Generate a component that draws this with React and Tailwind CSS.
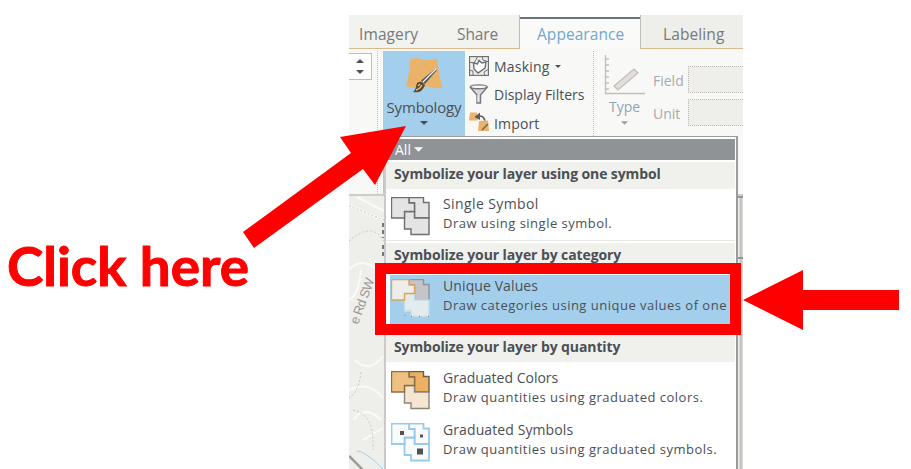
import React from 'react';

const UI = "font-['Open_Sans','Noto_Sans',sans-serif]";

const LEFT = '0.5,0.5 18,0.5 18,6 23.5,6 23.5,14.5 13.5,14.5 13.5,21 0.5,21';
const RIGHT = '18,0.5 32.5,0.5 32.5,5.5 38,5.5 38,21 23.5,21 23.5,6 18,6';
const BOTTOM = '13.5,14.5 23.5,14.5 23.5,21 38,21 38,37.5 20,37.5 20,32 13.5,32';

function Parcels({ fills, strokes, width = 1.4, children }) {
  return (
    <svg className="h-[39px] w-[39px] shrink-0" viewBox="0 0 39 39">
      {[RIGHT, BOTTOM, LEFT].map((p, i) => (
        <polygon key={p} points={p} fill={fills[i]} stroke={strokes[i]} strokeWidth={width} />
      ))}
      {children}
    </svg>
  );
}

const SingleIcon = () => (
  <Parcels fills={['#e4e5e3', '#e4e5e3', '#e4e5e3']} strokes={['#6b6e72', '#6b6e72', '#6b6e72']} />
);
const UniqueIcon = () => (
  <Parcels fills={['#c3c5c8', '#e4ebed', '#edeeea']} strokes={['#8f9598', '#c4dbe8', '#dca65a']}>
    <path d="M13.5 36.5h1M20 37.5h1M37 37.5h1M28 37.5h1" stroke="#777" />
  </Parcels>
);
const ColorsIcon = () => (
  <Parcels fills={['#ebb061', '#f4e6d0', '#eec182']} strokes={['#6b5c4b', '#8d8579', '#8a7049']} />
);
const SymbolsIcon = () => (
  <Parcels fills={['#fafafa', '#fafafa', '#fafafa']} strokes={['#97cbec', '#97cbec', '#97cbec']} width={1.8}>
    <path d="M9 8h4v4H9zM29 11.500h3v3h-3zM26 25.500h6v6h-6z" fill="#4d5358" />
  </Parcels>
);

function Header({ children }) {
  return (
    <div className="flex h-[27px] items-center bg-[#f0f0ed] pb-[3px] pl-2">
      <span className="text-[14px] leading-5 font-bold tracking-[-0.1px] text-[#4b4f54]">{children}</span>
    </div>
  );
}

function Item({ icon, title, desc, titleClass, className }) {
  return (
    <div className={'flex gap-[13px] ' + className}>
      {icon}
      <div className="-mt-[4px] flex flex-col">
        <span className={'h-5 text-[14px] leading-[21px] text-[#4b4f54] ' + titleClass}>{title}</span>
        <span className="h-5 text-[13px] leading-[21px] tracking-[0.49px] text-[#4b4f54]">{desc}</span>
      </div>
    </div>
  );
}

function Tabs() {
  return (
    <div className="flex h-[34px] text-[15.500px] leading-[38px] text-[#77797b]">
      <div className="flex w-[171px] border-r border-b border-r-[#c2bcb6] border-b-[#dcb98c] bg-[#f2f2ef] pl-[10px]">
        <span className="w-[98px] tracking-[0.1px]">Imagery</span>
        <span className="tracking-[-0.1px]">Share</span>
      </div>
      <div className="mt-[2px] w-[120px] border-t-2 border-[#68747e] bg-[#fafaf9] pl-[17px] leading-[31px] tracking-[0.05px] text-[#71a7cd]">
        Appearance
      </div>
      <div className="flex-1 border-b border-l border-b-[#dcb98c] border-l-[#c2bcb6] bg-[#eeeeea] pl-[22px] tracking-[0.1px]">
        Labeling
      </div>
    </div>
  );
}

const Caret = ({ className }) => (
  <svg className={className} viewBox="0 0 8 4">
    <path d="M0 0h8L4 4z" fill="currentColor" />
  </svg>
);

function Ribbon() {
  return (
    <div className="flex h-[147px] border-b-2 border-[#d0ccc7] bg-[#f8f8f7] pt-[2px] text-[14px] leading-5 text-[#4b4f54]">
      <div className="mt-[2px] flex h-[27px] w-[23px] shrink-0 flex-col items-center justify-between border border-l-0 border-[#c2bcb6] bg-white py-[5px] pr-[1px]">
        <Caret className="h-1 w-2 rotate-180" />
        <Caret className="h-1 w-2" />
      </div>
      <div className="ml-[5px] w-[6px] shrink-0 border-l border-dotted border-[#c2bcb6]" />
      <div className="flex w-[82px] shrink-0 flex-col items-center bg-[#a3cfec] pt-[6px]">
        <svg className="h-[38px] w-[40px]" viewBox="0 0 40 38">
          <path d="M6 3q4-3 9-1.500 9 3 18.500 0 0 10 5 29.500-8 1-15-2-9 4-22 0 4-10 4.500-26z" fill="#ebb36a" />
          <path d="M33 13 21 27l-4-3.500L31 12z" fill="#55585c" />
          <path d="m32 12-13 13" stroke="#f4f4f4" strokeWidth="1.200" />
          <path d="M18 25q-6-1-6 5-1 4-3 5 9 2 12-7z" fill="#5b4a35" />
          <path d="M12 33q4-1 6-5M14 29l2-2" stroke="#f0b96e" strokeWidth="1.300" fill="none" />
        </svg>
        <span className="mt-[2px] text-[15px] leading-5 tracking-[-0.15px]">Symbology</span>
        <Caret className="mt-[4px] h-1 w-2" />
      </div>
      <div className="flex w-[129px] shrink-0 flex-col gap-2 border-r border-dotted border-[#c2bcb6] pt-[5px] pl-1">
        <div className="flex h-5 items-center">
          <svg className="mr-[5px] h-5 w-5" viewBox="0 0 20 20" fill="none" stroke="#6d7073">
            <rect x="0.5" y="0.5" width="19" height="19" fill="#ededeb" strokeWidth="1.300" />
            <path d="M0 6 5 7 9 0M13 0l1 4 6 2M0 14l4 1v5M16 20l-1-4 5-3" />
            <path d="M4.500 7l4 1 1.500-3.500 3 2.500 4-1-1 6-7 5-4-4z" fill="#fff" strokeWidth="1.400" />
          </svg>
          <span className="relative top-px tracking-[0.2px]">Masking</span>
          <Caret className="ml-[5px] h-[3px] w-[6px]" />
        </div>
        <div className="flex h-5 items-center">
          <svg className="mr-[5px] h-5 w-5" viewBox="0 0 20 20" fill="none" stroke="#75787b">
            <path d="M1.500 3.500 8 11v8h3.500v-8L18 3.500z" fill="#d9d9d7" strokeWidth="1.400" />
            <ellipse cx="9.700" cy="2.800" rx="8.200" ry="1.900" fill="#f7f7f5" strokeWidth="1.400" />
            <path d="M9 11v7" stroke="#fff" />
          </svg>
          <span className="relative top-px">Display Filters</span>
        </div>
        <div className="flex h-5 items-center">
          <svg className="mr-[5px] h-5 w-5" viewBox="0 0 20 20">
            <path d="M1 0.500h7l1 8H0zM10 9l9-0.500 1 10.500H9z" fill="#ebb36a" />
            <path d="M8 4.500q6-2 8 4" stroke="#565a5e" strokeWidth="1.600" fill="none" />
            <path d="M11 0.500 5.500 5l5.500 3z" fill="#565a5e" />
            <path d="m19 12-6 6" stroke="#74685a" strokeWidth="1.600" />
          </svg>
          <span className="relative top-[2px] tracking-[0.15px]">Import</span>
        </div>
      </div>
      <div className="flex w-[59px] shrink-0 flex-col items-center pt-[4px] pl-[2px] text-[#9b9d9f]">
        <svg className="h-[40px] w-[42px]" viewBox="0 0 42 40" fill="none" stroke="#c3beb9">
          <path d="M1.500 0v38.500H41M1 4h4M1 10h4M1 16h4M1 22h4M1 28h4M1 34h4" strokeWidth="1.300" />
          <path d="m10 31 20-17 4 4-20 17z" fill="#e1dedb" strokeWidth="1.200" />
        </svg>
        <span className="mt-[2px] text-[#8ea5b5]">Type</span>
        <Caret className="mt-[4px] h-1 w-[7px]" />
      </div>
      <div className="flex flex-1 flex-col gap-[6px] pt-[15px] text-[#a9aaab]">
        {['Field', 'Unit'].map((label) => (
          <div key={label} className="flex h-[27px] items-center">
            <span className="w-[35px] shrink-0 pt-[2px]">{label}</span>
            <div className="h-full flex-1 border border-r-0 border-dotted border-[#bdb8b3] bg-[#eeeeea]" />
          </div>
        ))}
      </div>
    </div>
  );
}

function MapStrip() {
  return (
    <svg className="h-[273px] w-[394px]" viewBox="0 196 394 273">
      <rect y="196" width="394" height="273" fill="#eeeeea" />
      <g fill="none" stroke="#fafaf9" strokeWidth="2">
        <path d="M0 206 35 220M8 197l27 14M0 270q14-16 34 5M0 300q10-6 12-30M6 360q14 14 28-4M0 390q20-10 34 8M4 420q12-16 28 0M14 440l20-12" />
      </g>
      <g fill="none" stroke="#c8c4c0" strokeDasharray="2 2">
        <path d="M0 206 35 220M0 241q26-22 36 4M12 372q-2 20-12 26M4 410q22 4 20 40" />
      </g>
      <path d="M34 223v15M34 245v12" stroke="#75787a" strokeWidth="2" strokeDasharray="4 3" />
      <path d="M0 456 18 474" stroke="#9c9c9a" strokeWidth="2.500" />
      <path d="M8 451q8 0 26 18" fill="none" stroke="#a3cfec" />
      <text transform="translate(9 325) rotate(-70)" fontSize="13" fontFamily="Liberation Sans, sans-serif" fill="#9a9896" textLength="48">
        e Rd SW
      </text>
      <path d="M392 196v273" stroke="#c8c4c0" strokeWidth="3" />
      <path d="M388 197h6M388 258h6" stroke="#92969a" strokeWidth="2" />
    </svg>
  );
}

function Menu() {
  return (
    <div className="absolute top-[136px] left-[384px] h-[340px] w-[354px] border-2 border-t border-[#9a9da0] border-l-[#c9cac9] bg-white pt-[2px] pr-[1px]">
      <div className="mb-[2px] flex h-[21px] items-center bg-[#8f9396] pl-[9px] text-white">
        <span className="text-[14px]">All</span>
        <Caret className="ml-[3px] h-[5px] w-[9px]" />
      </div>
      <Header>Symbolize your layer using one symbol</Header>
      <Item
        className="h-[52px] border-b border-[#e6e6e3] pt-2 pl-[5px]"
        icon={<SingleIcon />}
        title="Single Symbol"
        desc="Draw using single symbol."
        titleClass="tracking-[0.4px]"
      />
      <div className="mt-[2px]">
        <Header>Symbolize your layer by category</Header>
      </div>
      <Item
        className="mt-[5px] mb-[6px] ml-1 h-[54px] overflow-hidden bg-[#a3cfec] pt-[4px] pl-[1px]"
        icon={<UniqueIcon />}
        title="Unique Values"
        desc="Draw categories using unique values of one"
        titleClass="tracking-[0.1px]"
      />
      <Header>Symbolize your layer by quantity</Header>
      <Item
        className="h-[52px] pt-[9px] pl-[5px]"
        icon={<ColorsIcon />}
        title="Graduated Colors"
        desc="Draw quantities using graduated colors."
        titleClass="tracking-[0px]"
      />
      <Item
        className="h-[52px] pt-[9px] pl-[5px]"
        icon={<SymbolsIcon />}
        title="Graduated Symbols"
        desc="Draw quantities using graduated symbols."
        titleClass="tracking-[0.1px]"
      />
    </div>
  );
}

export default function App() {
  return (
    <div className={'relative flex h-[469px] w-[911px] overflow-hidden bg-white whitespace-nowrap ' + UI}>
      <div className="w-[349px] shrink-0 pt-[232px] pl-[7px]">
        <span className="inline-block origin-left scale-x-[1.015] font-[Lato] text-[54px] leading-[68px] font-bold text-[#ff0000] [-webkit-text-stroke:1px_#ff0000]">
          Click here
        </span>
      </div>
      <div className="flex w-[394px] shrink-0 flex-col pt-[15px]">
        <Tabs />
        <Ribbon />
        <MapStrip />
      </div>
      <Menu />
      <div className="absolute top-[263px] left-[375px] h-[72px] w-[366px] border-[11px] border-[#ff0000]" />
      <svg className="absolute inset-0 h-[469px] w-[911px]" viewBox="0 0 911 469" fill="#ff0000">
        <path d="M406 126 340 137l11 16-108 79 11 16 109-79 12 16z" />
        <path d="M743 300l60-30v20h96v20h-96v20z" />
      </svg>
    </div>
  );
}
